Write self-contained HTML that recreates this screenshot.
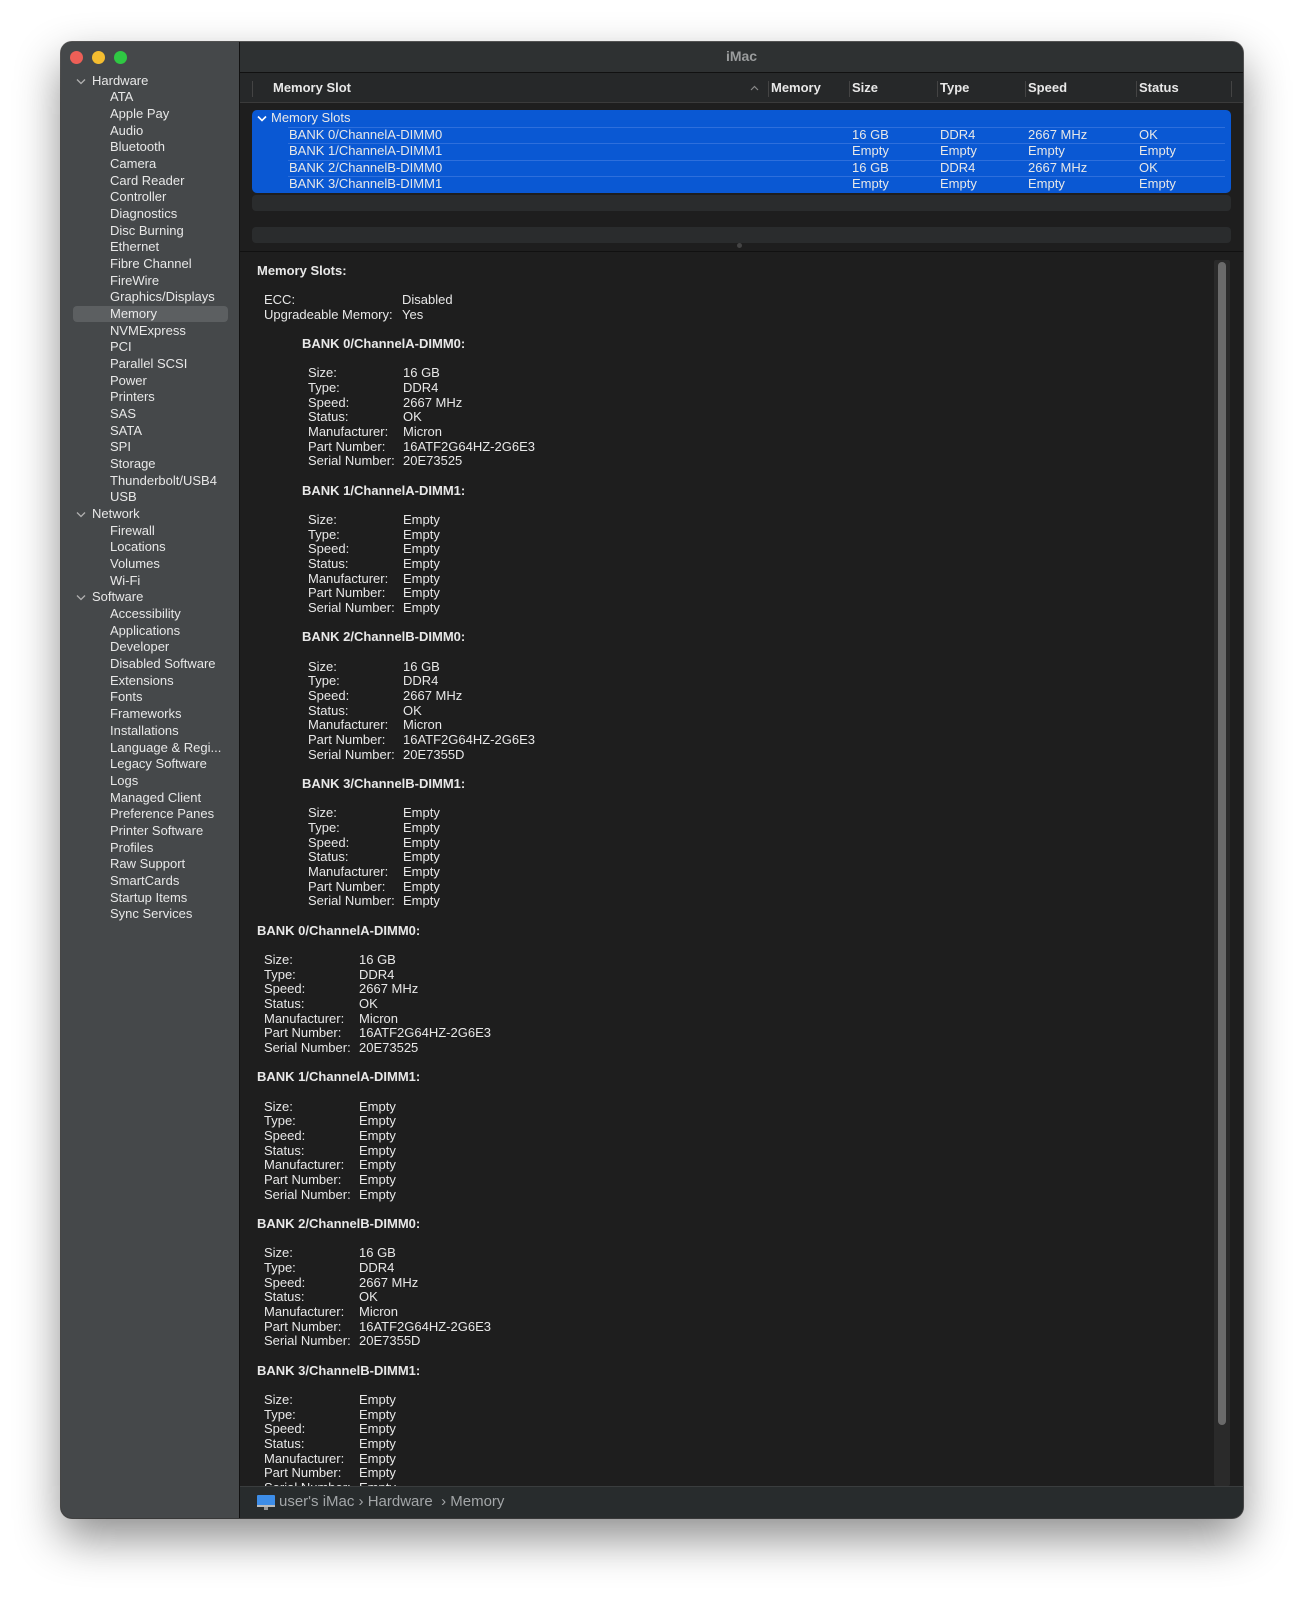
<!DOCTYPE html>
<html><head><meta charset="utf-8"><style>
*{margin:0;padding:0;box-sizing:border-box}
body{width:1304px;height:1600px;background:#fff;position:relative;overflow:hidden;font-family:"Liberation Sans",sans-serif;font-size:13px;color:#e8e8e8}
.win{position:absolute;left:61px;top:42px;width:1182px;height:1476px;border-radius:11px;background:#1e1e1e;overflow:hidden;box-shadow:0 20px 45px rgba(0,0,0,.45),0 0 0 1px #5a5a5a}
.side{position:absolute;left:0;top:0;width:179px;height:100%;background:#45484a;border-right:1px solid #111}
.dot{position:absolute;top:9px;width:13px;height:13px;border-radius:50%}
.si{position:absolute;left:0;height:16.67px;line-height:16.67px;white-space:nowrap}
.grp{left:31px}
.itm{left:49px}
.chev{position:absolute;left:15px}
.sel{position:absolute;left:12px;top:264px;width:155px;height:16px;border-radius:4px;background:#5c5f61}
.title{position:absolute;left:179px;right:0;top:0;height:31px;background:#2e3132;border-bottom:1px solid #111;text-align:center;line-height:28px;font-weight:bold;font-size:14px;color:#9a9c9d}
.hdr{position:absolute;left:179px;right:0;top:31px;height:30px;background:#262829;border-bottom:1px solid #3a3a3a}
.hdr span{position:absolute;top:7px;font-weight:bold;font-size:13px}
.hdr i{position:absolute;top:8px;width:1px;height:16px;background:#444}
.blue{position:absolute;left:191px;width:979px;top:68px;height:83px;background:#0a58d3;border-radius:5px}
.row{position:absolute;left:0;right:0;height:16.6px;line-height:16.6px;white-space:nowrap}
.row span{position:absolute}
.sep{position:absolute;left:36px;right:6px;height:1px;background:#2e6fdc}
.stripe{position:absolute;left:191px;width:979px;height:16px;background:#2a2c2d;border-radius:4px}
.det{position:absolute;left:179px;right:0;top:209px;height:1235px;overflow:hidden;background:#1e1e1e;border-top:1px solid #111}
.l{position:absolute;height:14.67px;line-height:14.67px;white-space:nowrap}
.b{font-weight:bold}
.stat{position:absolute;left:179px;right:0;top:1444px;height:32px;background:#282c2d;border-top:1px solid #3a3d3e;color:#a3a6a8;font-size:15px;line-height:30px}
</style></head><body>
<div class="win">
 <div class="side">
  <div class="dot" style="left:9px;background:#ed5f57"></div>
  <div class="dot" style="left:31px;background:#f4bd30"></div>
  <div class="dot" style="left:53px;background:#2fc843"></div>
  <div class="sel"></div>
  <div id="sl"></div>
 </div>
 <div class="title">iMac</div>
 <div class="hdr">
  <i style="left:12px"></i><span style="left:33px">Memory Slot</span>
  <svg style="position:absolute;left:510px;top:12px" width="9" height="6" viewBox="0 0 9 6"><polyline points="1,5 4.5,1.5 8,5" fill="none" stroke="#888" stroke-width="1.2"/></svg>
  <i style="left:528px"></i><span style="left:531px">Memory</span>
  <i style="left:609px"></i><span style="left:612px">Size</span>
  <i style="left:697px"></i><span style="left:700px">Type</span>
  <i style="left:785px"></i><span style="left:788px">Speed</span>
  <i style="left:896px"></i><span style="left:899px">Status</span>
  <i style="left:991px"></i>
 </div>
 <div class="blue">
  <div class="row" style="top:0"><svg style="position:absolute;left:5px;top:5px" width="10" height="7" viewBox="0 0 10 7"><polyline points="1,1.5 5,5.5 9,1.5" fill="none" stroke="#fff" stroke-width="1.6"/></svg><span style="left:19px">Memory Slots</span></div>
  <div class="sep" style="top:16.6px"></div>
  <div class="row" style="top:16.6px"><span style="left:37px">BANK 0/ChannelA-DIMM0</span><span style="left:600px">16 GB</span><span style="left:688px">DDR4</span><span style="left:776px">2667 MHz</span><span style="left:887px">OK</span></div>
  <div class="sep" style="top:33.2px"></div>
  <div class="row" style="top:33.2px"><span style="left:37px">BANK 1/ChannelA-DIMM1</span><span style="left:600px">Empty</span><span style="left:688px">Empty</span><span style="left:776px">Empty</span><span style="left:887px">Empty</span></div>
  <div class="sep" style="top:49.8px"></div>
  <div class="row" style="top:49.8px"><span style="left:37px">BANK 2/ChannelB-DIMM0</span><span style="left:600px">16 GB</span><span style="left:688px">DDR4</span><span style="left:776px">2667 MHz</span><span style="left:887px">OK</span></div>
  <div class="sep" style="top:66.4px"></div>
  <div class="row" style="top:66.4px"><span style="left:37px">BANK 3/ChannelB-DIMM1</span><span style="left:600px">Empty</span><span style="left:688px">Empty</span><span style="left:776px">Empty</span><span style="left:887px">Empty</span></div>
 </div>
 <div class="stripe" style="top:153px"></div>
 <div class="stripe" style="top:185px"></div>
 <div style="position:absolute;left:676px;top:201px;width:5px;height:5px;border-radius:50%;background:#444"></div>
 <div class="det" id="det">
  <div style="position:absolute;left:974px;top:8px;width:16px;height:1226px;background:#2a2a2a;border-radius:2px"></div>
  <div style="position:absolute;left:978px;top:10px;width:8px;height:1163px;background:#6a6a6a;border-radius:4px"></div>
 </div>
 <div class="stat">
  <svg style="position:absolute;left:17px;top:8px" width="18" height="15" viewBox="0 0 18 15"><rect x="0" y="0" width="18" height="11" rx="1" fill="#3d8de8"/><rect x="0" y="10" width="18" height="2" fill="#bbb"/><rect x="7" y="12" width="4" height="3" fill="#999"/></svg>
  <span style="position:absolute;left:39px">user's iMac &#8250; Hardware &nbsp;&#8250; Memory</span>
 </div>
</div>
<script>
var items=[["g","Hardware"],"ATA","Apple Pay","Audio","Bluetooth","Camera","Card Reader","Controller","Diagnostics","Disc Burning","Ethernet","Fibre Channel","FireWire","Graphics/Displays","Memory","NVMExpress","PCI","Parallel SCSI","Power","Printers","SAS","SATA","SPI","Storage","Thunderbolt/USB4","USB",["g","Network"],"Firewall","Locations","Volumes","Wi-Fi",["g","Software"],"Accessibility","Applications","Developer","Disabled Software","Extensions","Fonts","Frameworks","Installations","Language & Regi...","Legacy Software","Logs","Managed Client","Preference Panes","Printer Software","Profiles","Raw Support","SmartCards","Startup Items","Sync Services"];
var h="";items.forEach(function(it,i){var t=30.7+i*16.67;if(Array.isArray(it)){h+='<svg class="chev" style="top:'+(t+5)+'px" width="10" height="7" viewBox="0 0 10 7"><polyline points="1,1.5 5,5.5 9,1.5" fill="none" stroke="#b0b0b0" stroke-width="1.3"/></svg><div class="si grp" style="top:'+t+'px">'+it[1]+'</div>';}else h+='<div class="si itm" style="top:'+t+'px">'+it.replace("&","&amp;")+'</div>';});
document.getElementById("sl").innerHTML=h;
var L=14.67,y=11.5,d="";
function line(x,txt,bold,vx,val){d+='<div class="l'+(bold?' b':'')+'" style="left:'+x+'px;top:'+y.toFixed(1)+'px">'+txt+'</div>';if(val!==undefined)d+='<div class="l" style="left:'+vx+'px;top:'+y.toFixed(1)+'px">'+val+'</div>';y+=L;}
var full=["16 GB","DDR4","2667 MHz","OK","Micron","16ATF2G64HZ-2G6E3"];
var emp=["Empty","Empty","Empty","Empty","Empty","Empty","Empty"];
var labs=["Size:","Type:","Speed:","Status:","Manufacturer:","Part Number:","Serial Number:"];
var banks=[["BANK 0/ChannelA-DIMM0:",full.concat(["20E73525"])],["BANK 1/ChannelA-DIMM1:",emp],["BANK 2/ChannelB-DIMM0:",full.concat(["20E7355D"])],["BANK 3/ChannelB-DIMM1:",emp]];
line(17,"Memory Slots:",1);y+=L;
line(24,"ECC:",0,162,"Disabled");line(24,"Upgradeable Memory:",0,162,"Yes");y+=L;
banks.forEach(function(b){line(62,b[0],1);y+=L;for(var k=0;k<7;k++)line(68,labs[k],0,163,b[1][k]);y+=L;});
banks.forEach(function(b){line(17,b[0],1);y+=L;for(var k=0;k<7;k++)line(24,labs[k],0,119,b[1][k]);y+=L;});
document.getElementById("det").insertAdjacentHTML("beforeend",d);
</script>
</body></html>
